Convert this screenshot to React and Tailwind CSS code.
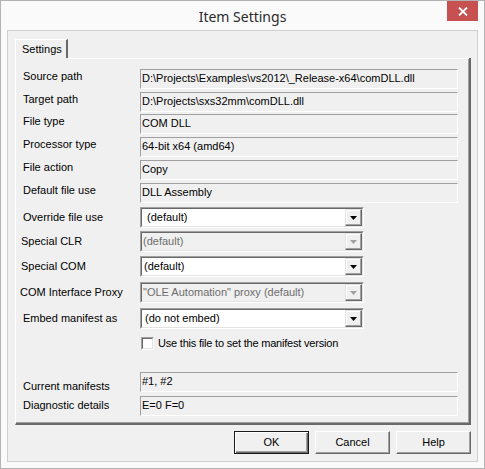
import React from "react";

const F = { fontFamily: '"Liberation Sans", Arial, sans-serif' };

function StaticField({ text, className = "" }) {
  return (
    <div
      className={`w-[318px] h-[20px] border-t border-l border-[#a0a0a0] border-r border-r-white border-b border-b-white bg-[#f0f0f0] text-[11px] leading-[17px] text-black pl-[1px] whitespace-nowrap overflow-hidden ${className}`}
    >
      {text}
    </div>
  );
}

function Combo({ text, disabled, textPad = "pl-[5px]" }) {
  return (
    <div className="w-[224px] h-[21px] border border-t-[#a0a0a0] border-l-[#a0a0a0] border-r-white border-b-white">
      <div
        className={`w-full h-full flex border border-t-[#696969] border-l-[#696969] border-r-[#e3e3e3] border-b-[#e3e3e3] ${
          disabled ? "bg-[#f0f0f0]" : "bg-white"
        }`}
      >
        <div
          className={`flex-1 text-[11px] leading-[17px] ${textPad} whitespace-nowrap overflow-hidden ${
            disabled ? "text-[#6d6d6d]" : "text-black"
          }`}
        >
          {text}
        </div>
        <div className="w-[17px] h-[17px] border border-t-[#e3e3e3] border-l-[#e3e3e3] border-r-[#696969] border-b-[#696969] bg-[#f0f0f0] flex items-center justify-center shadow-[inset_-1px_-1px_0_#a0a0a0,inset_1px_1px_0_#ffffff]">
          <svg width="7" height="4" viewBox="0 0 7 4">
            <polygon points="0,0 7,0 3.5,4" fill={disabled ? "#a0a0a0" : "#000"} />
          </svg>
        </div>
      </div>
    </div>
  );
}

function Button({ children, isDefault }) {
  return (
    <div
      className={`w-[75px] h-[23px] flex items-center justify-center text-[11px] text-black bg-[#f0f0f0] ${
        isDefault
          ? "border border-[#1a1a1a] shadow-[inset_1px_1px_0_#ffffff,inset_-1px_-1px_0_#696969,inset_-2px_-2px_0_#a0a0a0]"
          : "border border-t-white border-l-white border-r-[#696969] border-b-[#696969] shadow-[inset_-1px_-1px_0_#a0a0a0]"
      }`}
    >
      {children}
    </div>
  );
}

export default function App() {
  return (
    <div
      style={F}
      className="w-[485px] h-[469px] border border-[#b3b3b3] bg-[#fafafa] flex flex-col px-[6px] pb-[6px] relative"
    >
      <div className="h-[29px] flex items-center justify-center">
        <span
          className="text-[14px] text-[#2b2b2b] mt-[1px]"
          style={{ fontFamily: '"Noto Sans", "Liberation Sans", sans-serif' }}
        >
          Item Settings
        </span>
      </div>
      <div className="absolute top-0 right-[6px] w-[31px] h-[20px] bg-[#c75050] flex items-center justify-center">
        <svg width="10" height="9" viewBox="0 0 10 9">
          <path d="M1 0.5 L9 8.5 M9 0.5 L1 8.5" stroke="#fff" strokeWidth="1.8" />
        </svg>
      </div>

      <div className="flex-1 border border-[#cfcfcf] bg-[#f0f0f0] flex flex-col pt-[8px] pl-[7px] pr-[6px] pb-[6px]">
        <div className="h-[19px] flex">
          <div className="w-[53px] h-[19px] border-t border-l border-white border-r-2 border-r-[#696969] text-[11px] text-black flex items-center pl-[6px]">
            Settings
          </div>
          <div className="flex-1 h-[19px]"></div>
        </div>
        <div className="h-[367px] border-l border-white border-r-2 border-r-[#696969] border-b-2 border-b-[#696969] shadow-[inset_-1px_-1px_0_#a0a0a0] relative flex flex-col pl-[4px] pt-[11px] text-[11px] text-black">
          <div className="absolute top-0 left-[52px] right-0 h-px bg-white"></div>

          {[
            ["Source path", "D:\\Projects\\Examples\\vs2012\\_Release-x64\\comDLL.dll", "mt-0"],
            ["Target path", "D:\\Projects\\sxs32mm\\comDLL.dll", "mt-[3px]"],
            ["File type", "COM DLL", "mt-[2px]"],
            ["Processor type", "64-bit x64 (amd64)", "mt-[3px]"],
            ["File action", "Copy", "mt-[3px]"],
            ["Default file use", "DLL Assembly", "mt-[3px]"],
          ].map(([l, v, m]) => (
            <div key={l} className={`flex items-start ${m}`}>
              <div className="w-[120px] pl-[3px] pt-[1px] leading-[13px] whitespace-nowrap">{l}</div>
              <StaticField text={v} />
            </div>
          ))}

          <div className="flex items-center mt-[4px]">
            <div className="w-[120px] pl-[3px] whitespace-nowrap">Override file use</div>
            <Combo text="(default)" textPad="pl-[5px]" />
          </div>
          <div className="flex items-center mt-[3px]">
            <div className="w-[120px] pl-[1px] whitespace-nowrap">Special CLR</div>
            <Combo text="(default)" disabled textPad="pl-[1px]" />
          </div>
          <div className="flex items-center mt-[4px]">
            <div className="w-[120px] pl-[1px] whitespace-nowrap">Special COM</div>
            <Combo text="(default)" textPad="pl-[2px]" />
          </div>
          <div className="flex items-center mt-[5px]">
            <div className="w-[120px] pl-0 whitespace-nowrap">COM Interface Proxy</div>
            <Combo text={'"OLE Automation" proxy (default)'} disabled textPad="pl-[1px]" />
          </div>
          <div className="flex items-center mt-[5px]">
            <div className="w-[120px] pl-[3px] whitespace-nowrap">Embed manifest as</div>
            <Combo text="(do not embed)" textPad="pl-[3px]" />
          </div>

          <div className="flex items-center mt-[6px] pl-[121px]">
            <div className="w-[13px] h-[13px] border border-t-[#a0a0a0] border-l-[#a0a0a0] border-r-white border-b-white">
              <div className="w-full h-full bg-white border border-t-[#696969] border-l-[#696969] border-r-[#e3e3e3] border-b-[#e3e3e3]"></div>
            </div>
            <span className="ml-[4px] whitespace-nowrap tracking-[-0.2px]">Use this file to set the manifest version</span>
          </div>

          <div className="flex items-start mt-[20px]">
            <div className="w-[120px] pl-[3px] pt-[8px] leading-[13px] whitespace-nowrap">Current manifests</div>
            <StaticField text="#1, #2" className="leading-[15px]" />
          </div>
          <div className="flex items-start mt-[3px]">
            <div className="w-[120px] pl-[3px] pt-[3px] leading-[13px] whitespace-nowrap">Diagnostic details</div>
            <StaticField text="E=0 F=0" className="leading-[15px]" />
          </div>
        </div>

        <div className="mt-[6px] h-[23px] flex justify-end gap-[6px]">
          <Button isDefault>OK</Button>
          <Button>Cancel</Button>
          <Button>Help</Button>
        </div>
      </div>
    </div>
  );
}
